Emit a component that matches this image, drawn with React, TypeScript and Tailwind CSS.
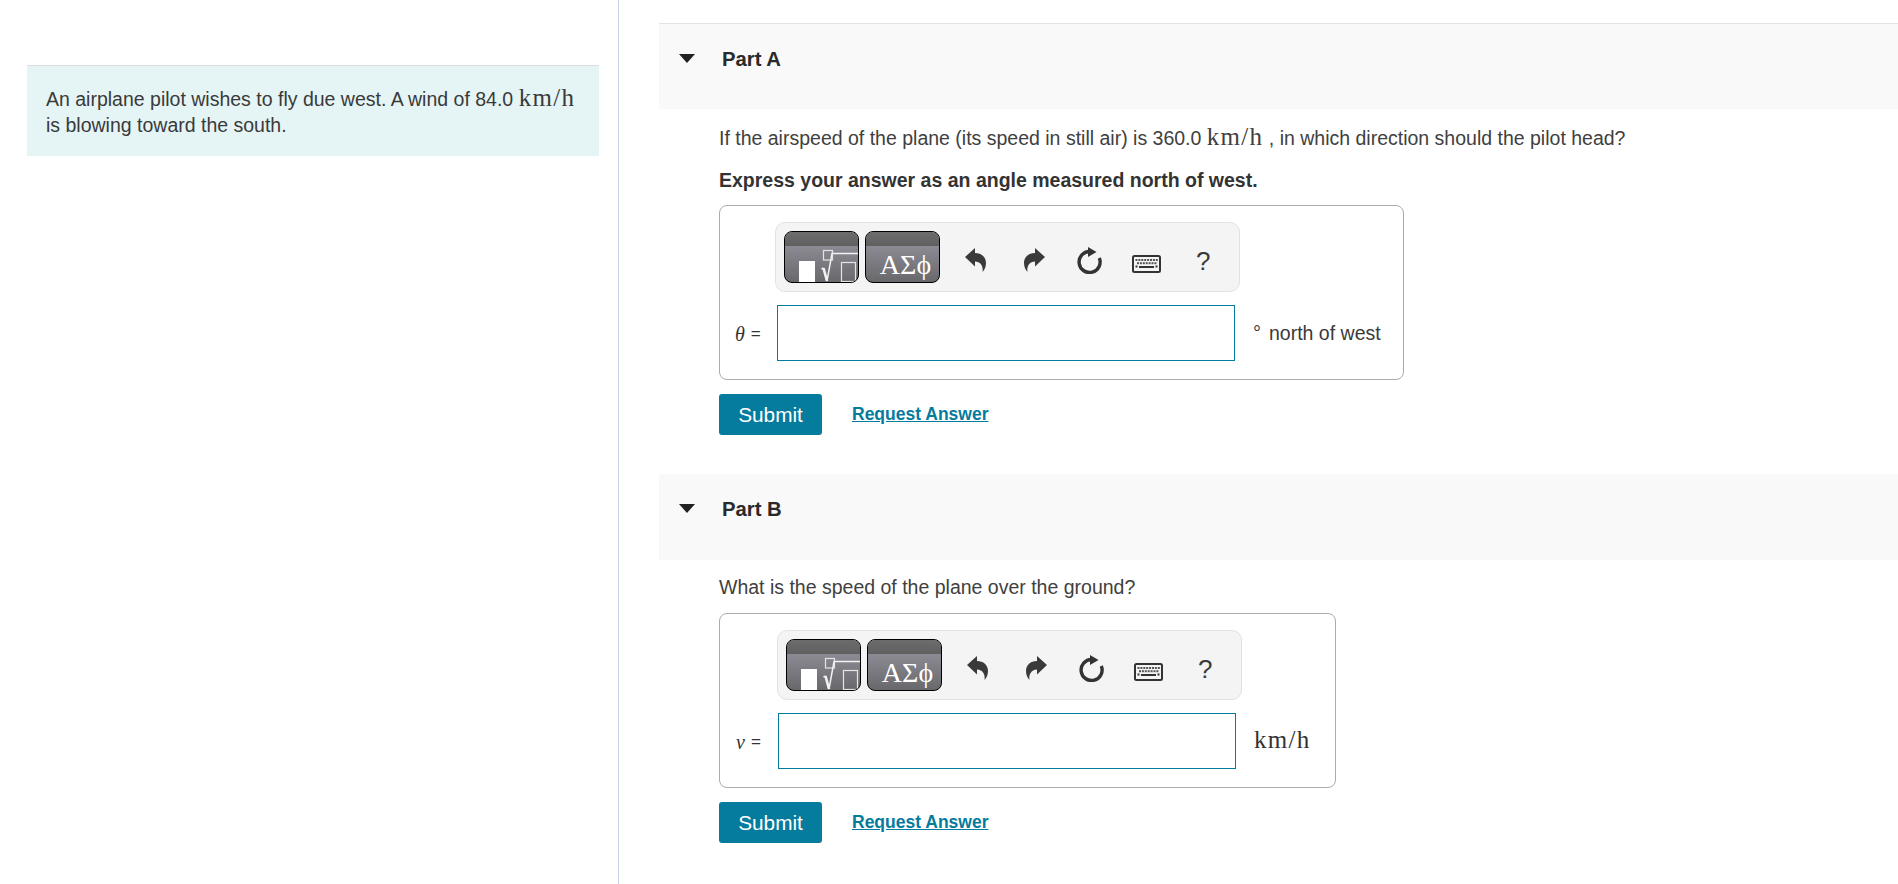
const sans = "font-['Liberation_Sans',Arial,sans-serif]";
const math = "font-['Liberation_Serif',serif] text-[25px] tracking-[1.3px]";

function Undo({ flip }: { flip?: boolean }) {
  return (
    <svg width="21" height="24" viewBox="0 0 21 24" className={flip ? "-scale-x-100" : ""}>
      <path d="M0 9 L10 0 V5 C16.500 5 21 9 21 15 C21 19 19.500 22 17.500 24 C18.500 19 16 13.500 10 13.500 V18.500 Z" fill="#3a3a3a" />
    </svg>
  );
}

function Refresh() {
  return (
    <svg width="25" height="27" viewBox="0 0 25 27">
      <path d="M12.500 4.500 A10.500 10.500 0 1 0 22.300 11" fill="none" stroke="#333" strokeWidth="3.400" />
      <path d="M11 0 L19.500 5 L11 10 Z" fill="#333" />
    </svg>
  );
}

function Keyboard() {
  const keys: React.ReactNode[] = [];
  for (let i = 0; i < 8; i++) keys.push(<rect key={`a${i}`} x={3.5 + i * 2.9} y="4" width="2" height="2" fill="#555" />);
  for (let i = 0; i < 7; i++) keys.push(<rect key={`b${i}`} x={5 + i * 2.9} y="7.200" width="2" height="2" fill="#555" />);
  keys.push(<rect key="l" x="3.500" y="10.500" width="2" height="2" fill="#333" />);
  keys.push(<rect key="r" x="23.500" y="10.500" width="2" height="2" fill="#333" />);
  return (
    <svg width="29" height="18" viewBox="0 0 29 18">
      <rect x="1" y="1" width="27" height="16" rx="1.500" fill="#f4f4f4" stroke="#333" strokeWidth="2" />
      {keys}
      <rect x="7" y="11" width="15" height="2" fill="#333" />
    </svg>
  );
}

function Toolbar() {
  return (
    <div className="w-[465px] h-[70px] rounded-[10px] border border-[#e2e2e2] bg-[#f4f4f4] flex items-center pl-[8px]">
      <div className="relative w-[75px] h-[52px] rounded-[8px] border border-black overflow-hidden bg-gradient-to-b from-[#9b99a4] to-[#68686c]">
        <div className="h-[14px] bg-gradient-to-b from-[#6c6c6c] to-[#606060]" />
        <svg className="absolute left-0 top-0" width="73" height="50" viewBox="0 0 73 50">
          <rect x="14" y="29" width="16" height="21" fill="#fff" />
          <rect x="38.500" y="18.500" width="9" height="9.500" fill="none" stroke="#e4e4e4" strokeWidth="1.200" />
          <path d="M36.500 37 L38.500 36" fill="none" stroke="#f2f2f2" strokeWidth="1.600" />
          <path d="M38.500 36 L42 49" fill="none" stroke="#f2f2f2" strokeWidth="2.600" />
          <path d="M42 49 L47 21.500 H73" fill="none" stroke="#f2f2f2" strokeWidth="1.500" />
          <rect x="56.500" y="30.500" width="14" height="19" fill="none" stroke="#e4e4e4" strokeWidth="1.200" />
        </svg>
      </div>
      <div className="relative ml-[6px] w-[75px] h-[52px] rounded-[8px] border border-black overflow-hidden bg-gradient-to-b from-[#9b99a4] to-[#68686c]">
        <div className="h-[14px] bg-gradient-to-b from-[#6c6c6c] to-[#606060]" />
        <div className="absolute inset-x-0 top-[17px] text-center text-white text-[28px] leading-[32px] pl-[6px] font-['Liberation_Serif',serif]">ΑΣϕ</div>
      </div>
      <div className="ml-[25px] mt-[6px]"><Undo /></div>
      <div className="ml-[38px] mt-[6px]"><Undo flip /></div>
      <div className="ml-[32px] mt-[7px]"><Refresh /></div>
      <div className="ml-[30px] mt-[14px]"><Keyboard /></div>
      <div className={`ml-[35px] mt-[7px] text-[26px] leading-none text-[#3a3a3a] ${sans}`}>?</div>
    </div>
  );
}

function PartHeader({ title, top }: { title: string; top?: boolean }) {
  return (
    <div className={`h-[86px] bg-[#f9f9f9] flex items-start pt-[20px] ${top ? "border-t border-[#e3e3e3]" : ""}`}>
      <svg width="16" height="9" viewBox="0 0 16 9" className="ml-[20px] mt-[10px] shrink-0">
        <path d="M0 0 H16 L8 9 Z" fill="#222" />
      </svg>
      <div className="ml-[27px] mt-[2px] text-[20.3px] leading-[26px] font-bold text-[#2a2a2a]">{title}</div>
    </div>
  );
}

function Actions() {
  return (
    <div className="flex items-center">
      <button className="w-[103px] h-[41px] rounded-[3px] bg-[#057b9e] text-white text-[20.8px]">Submit</button>
      <a className="ml-[30px] mb-[1px] text-[17.5px] font-bold text-[#057b9e] underline">Request Answer</a>
    </div>
  );
}

export default function App() {
  return (
    <div className={`w-[1898px] h-[884px] overflow-hidden flex bg-white text-[19.5px] text-[#404040] ${sans}`}>
      <div className="w-[619px] shrink-0 border-r border-[#c5d3e4] pt-[65px] pl-[27px]">
        <div className="w-[572px] h-[91px] bg-[#e5f5f6] border-t border-[#dcdcdc] pl-[19px] pr-[10px] pt-[20px] leading-[26px] text-[#3a3a3a] whitespace-nowrap">
          An airplane pilot wishes to fly due west. A wind of 84.0{" "}
          <span className={`leading-[0] ${math}`}>km/h</span>
          <br />
          is blowing toward the south.
        </div>
      </div>
      <div className="flex-1 pl-[40px] pt-[23px]">
        <PartHeader title="Part A" top />
        <div className="pl-[60px]">
          <p className="mt-[16px] leading-[26px]">
            If the airspeed of the plane (its speed in still air) is 360.0{" "}
            <span className={`leading-[0] ${math}`}>km/h</span> , in which direction should the pilot head?
          </p>
          <p className="mt-[16px] leading-[26px] font-bold text-[#333]">Express your answer as an angle measured north of west.</p>
          <div className="mt-[12px] w-[685px] h-[175px] rounded-[8px] border border-[#ababab] pt-[16px] pl-[55px]">
            <Toolbar />
            <div className="relative mt-[13px] w-[458px] ml-[2px]">
              <div className="absolute left-[-42px] top-[15px] flex items-center gap-[6px] whitespace-nowrap text-[17px] leading-[28px] text-[#333]">
                <span className="font-['Liberation_Serif',serif] italic text-[20px]">θ</span> =
              </div>
              <div className="h-[56px] border border-[#057b9e] bg-white" />
              <div className="absolute left-[476px] top-[14px] flex whitespace-nowrap leading-[28px] text-[#3a3a3a]">
                <span className="w-[16px] mt-[4px] text-[20px] leading-[20px]">°</span>north of west
              </div>
            </div>
          </div>
          <div className="mt-[14px]"><Actions /></div>
        </div>
        <div className="mt-[39px]"><PartHeader title="Part B" /></div>
        <div className="pl-[60px]">
          <p className="mt-[14px] leading-[26px]">What is the speed of the plane over the ground?</p>
          <div className="mt-[13px] w-[617px] h-[175px] rounded-[8px] border border-[#ababab] pt-[16px] pl-[57px]">
            <Toolbar />
            <div className="relative mt-[13px] w-[458px] ml-[1px]">
              <div className="absolute left-[-42px] top-[15px] flex items-center gap-[6px] whitespace-nowrap text-[17px] leading-[28px] text-[#333]">
                <span className="font-['Liberation_Serif',serif] italic text-[20px]">v</span> =
              </div>
              <div className="h-[56px] border border-[#057b9e] bg-white" />
              <div className={`absolute left-[476px] top-[13px] whitespace-nowrap leading-[28px] text-[#333] ${math}`}>km/h</div>
            </div>
          </div>
          <div className="mt-[14px]"><Actions /></div>
        </div>
      </div>
    </div>
  );
}
